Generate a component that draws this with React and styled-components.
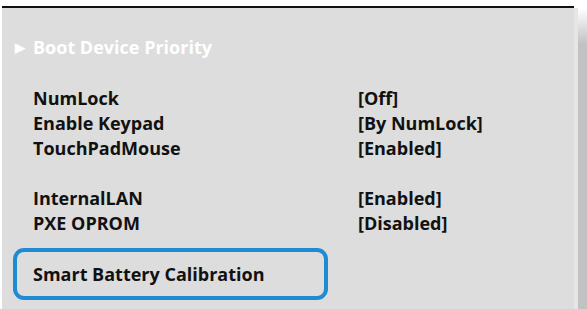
import React from "react";
import styled, { createGlobalStyle } from "styled-components";

const GlobalStyle = createGlobalStyle`
  html, body {
    margin: 0;
    padding: 0;
    background: #ffffff;
  }
  body {
    font-family: "Open Sans", "Noto Sans", "Liberation Sans", sans-serif;
  }
`;

const groups = [
  [
    { label: "NumLock", value: "[Off]" },
    { label: "Enable Keypad", value: "[By NumLock]" },
    { label: "TouchPadMouse", value: "[Enabled]" },
  ],
  [
    { label: "InternalLAN", value: "[Enabled]" },
    { label: "PXE OPROM", value: "[Disabled]" },
  ],
];

export default function App() {
  return (
    <>
      <GlobalStyle />
      <Screen>
        <Panel>
          <SubMenu>
            <Arrow>▶</Arrow>
            Boot Device Priority
          </SubMenu>
          {groups.map((rows, i) => (
            <Group key={i}>
              {rows.map((row) => (
                <Row key={row.label}>
                  <Label>{row.label}</Label>
                  <Value>{row.value}</Value>
                </Row>
              ))}
            </Group>
          ))}
          <Highlight>Smart Battery Calibration</Highlight>
        </Panel>
        <Edge />
      </Screen>
    </>
  );
}

const Screen = styled.div`
  display: flex;
  width: 587px;
  height: 309px;
  padding-top: 6px;
  box-sizing: border-box;
  overflow: hidden;
  background: #ffffff;
`;

const Panel = styled.div`
  width: 576px;
  margin-left: 2px;
  box-sizing: border-box;
  border-top: 2px solid #111111;
  background: #dcdddc;
  padding: 27px 0 0 11px;
  font-size: 18px;
  font-weight: 700;
  line-height: 25px;
  color: #111111;
`;

const Edge = styled.div`
  width: 9px;
  margin-top: 2px;
  border-left: 4px solid #e6e6e6;
  background: linear-gradient(to bottom, #ffffff 0%, #c2c2c2 12%, #c2c2c2 100%);
`;

const SubMenu = styled.div`
  display: flex;
  align-items: center;
  color: #ffffff;
  margin-left: 2px;
  margin-bottom: 26px;
`;

const Arrow = styled.span`
  font-size: 13px;
  width: 18px;
`;

const Group = styled.div`
  padding-left: 20px;
  & + & {
    margin-top: 25px;
  }
`;

const Row = styled.div`
  display: grid;
  grid-template-columns: 325px 1fr;
`;

const Label = styled.span``;

const Value = styled.span``;

const Highlight = styled.div`
  width: 315px;
  margin-top: 12px;
  box-sizing: border-box;
  border: 4px solid #1f8bd3;
  border-radius: 11px;
  padding: 10px 0 9px 16px;
`;
